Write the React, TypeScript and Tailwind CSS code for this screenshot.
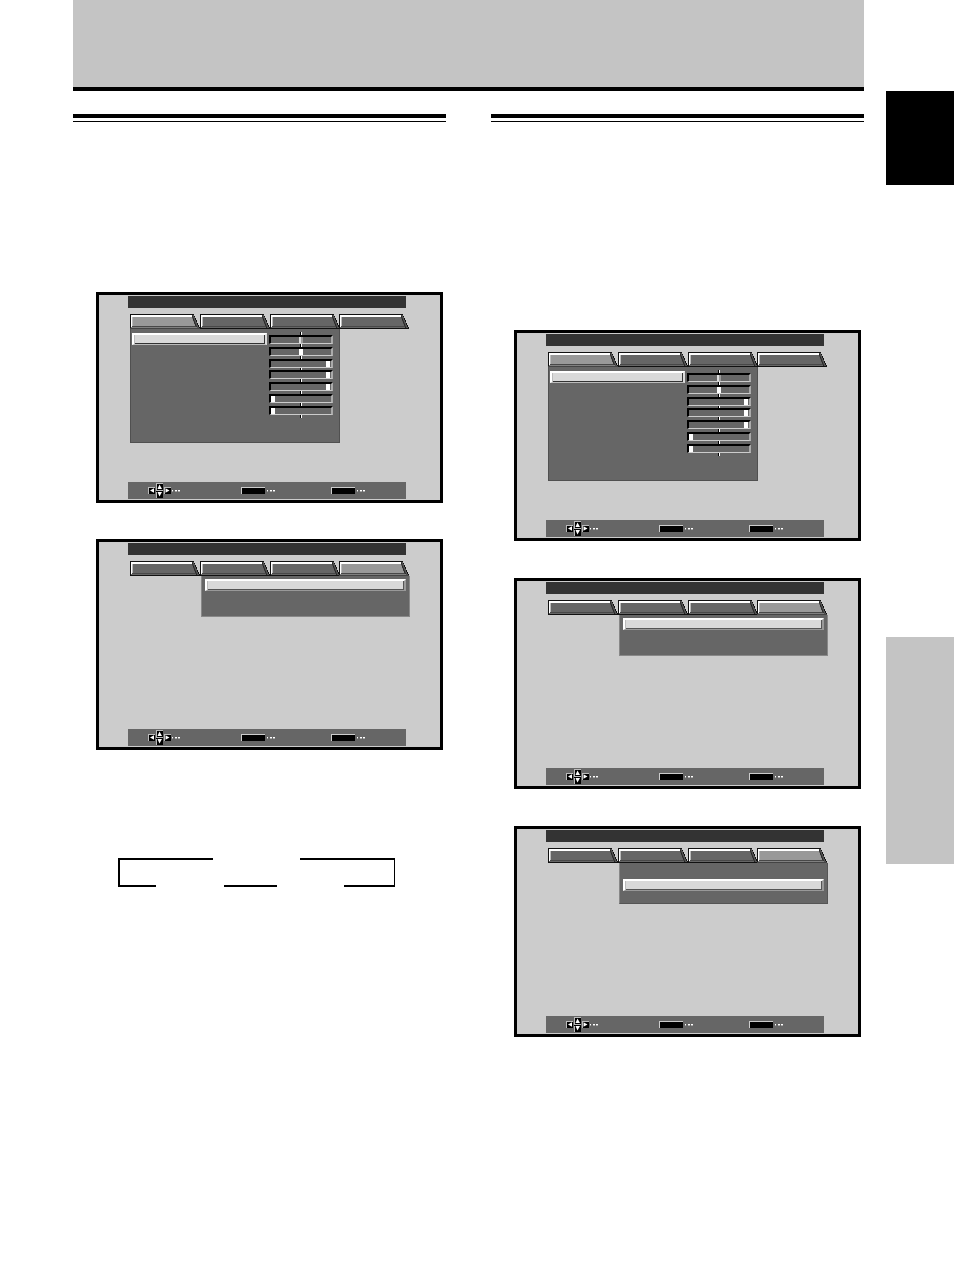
import React from "react";

type MenuKind = "picture" | "optionFirst" | "optionSecond";

function Tab({ active, label }: { active: boolean; label: string }) {
  return (
    <button type="button" role="tab" aria-selected={active} aria-label={label} className="block h-[15px] min-w-0 flex-1">
      <svg viewBox="0 0 70 15" preserveAspectRatio="none" className="block h-[15px] w-full overflow-visible" shapeRendering="crispEdges">
        <path d="M0 0H64L70 14V15H0Z" fill="#111" />
        <path d="M1 1H62L67 14H1Z" fill={active ? "#999" : "#666"} />
        <path d="M62 1H64L69 14H66Z" fill="#555" />
        <path d="M62 1L67 14" stroke="#222" strokeWidth="1" fill="none" />
        <path d="M1 1H62V3H1Z" fill="#fff" />
        <path d="M1 1H2V13H1Z" fill="#fff" />
        <path d="M2 3H3V12H2Z" fill="#bbb" />
        <path d="M2 12H65V13H2Z" fill="#484848" />
        {active && <path d="M1 13H67V14H1Z" fill="#808080" />}
        {active && <path d="M0 14H70V15H0Z" fill="#444" />}
      </svg>
    </button>
  );
}

function Slider({ value, label, selected }: { value: number; label: string; selected?: boolean }) {
  const base =
    "relative m-0 block h-[9px] w-16 appearance-none border-2 border-b border-b-[#ccc] border-l-black border-r-[#aaa] border-t-black bg-[#666] [&::-webkit-slider-thumb]:h-[6px] [&::-webkit-slider-thumb]:w-1 [&::-webkit-slider-thumb]:appearance-none [&::-webkit-slider-thumb]:rounded-none";
  return (
    <input
      type="range"
      aria-label={label}
      defaultValue={value}
      className={
        selected
          ? `${base} [&::-webkit-slider-thumb]:border-l-2 [&::-webkit-slider-thumb]:border-[#ddd] [&::-webkit-slider-thumb]:bg-[#999]`
          : `${base} [&::-webkit-slider-thumb]:bg-white`
      }
    />
  );
}

const sliders = [
  { label: "Contrast", value: 50 },
  { label: "Brightness", value: 50 },
  { label: "Red", value: 98 },
  { label: "Green", value: 98 },
  { label: "Blue", value: 98 },
  { label: "Horizontal enhance", value: 0 },
  { label: "Vertical enhance", value: 0 },
];

function Highlight({ label }: { label: string }) {
  return (
    <button
      type="button"
      aria-label={label}
      className="block h-3 w-full border-b border-l-2 border-r-2 border-t-2 border-b-[#999] border-l-white border-r-[#999] border-t-white bg-[#d9d9d9] shadow-[inset_1px_0_0_#bbb,inset_-1px_-1px_0_#555]"
    />
  );
}

function PicturePanel() {
  return (
    <div className="ml-0.5 flex h-[114px] w-[210px] border-b border-l border-r border-[#505050] bg-[#666] pl-px pt-1">
      <div className="w-[135px]">
        <button
          type="button"
          aria-label="Contrast"
          className="block h-3 w-full border-b border-l-2 border-r-2 border-t-2 border-b-[#bbb] border-l-white border-r-[#ddd] border-t-white bg-[#d9d9d9] shadow-[inset_1px_0_0_#bbb,inset_-1px_-1px_0_#333]"
        />
      </div>
      <div className="relative -mt-px ml-0.5 h-[86px] w-16 pt-[3px]">
        <span className="absolute left-[31px] top-0 h-full w-0.5 border-l border-black bg-white" />
        <div className="flex h-20 flex-col justify-between">
          {sliders.map((s, i) => (
            <Slider key={s.label} value={s.value} label={s.label} selected={i === 0} />
          ))}
        </div>
      </div>
    </div>
  );
}

function OptionPanel({ second }: { second: boolean }) {
  return (
    <div
      className={
        second
          ? "ml-[73px] h-[41px] w-[209px] border-b border-l border-r border-[#555] border-l-[#888] bg-[#666] px-[3px] pt-4"
          : "ml-[73px] h-[41px] w-[209px] border-b border-l border-r border-[#888] bg-[#666] px-[3px] pt-[3px]"
      }
    >
      <Highlight label={second ? "Second option" : "First option"} />
    </div>
  );
}

function Dots() {
  return (
    <svg width="8" height="2" viewBox="0 0 8 2" shapeRendering="crispEdges" aria-hidden="true">
      <path d="M0 0H1V1H0ZM3 0H5V1H3ZM6 0H8V1H6Z" fill="#fff" />
      <path d="M0 1H1V2H0ZM3 1H5V2H3ZM6 1H8V2H6Z" fill="#aaa" />
    </svg>
  );
}

function ArrowKeys() {
  return (
    <svg width="23" height="15" viewBox="0 0 23 15" aria-hidden="true">
      <g fill="#000" shapeRendering="crispEdges">
        <path d="M0 4H7V11H0ZM8 0H15V7H8ZM8 8H15V15H8ZM16 4H23V11H16Z" />
      </g>
      <path
        d="M0.5 11V4.5H7M8.5 7V0.5H15M8.5 15V8.5M16.5 11V4.5H23M8 7.5H15"
        stroke="#bbb"
        fill="none"
        shapeRendering="crispEdges"
      />
      <g fill="#fff">
        <path d="M2 7.5L6 5.2V9.8Z" />
        <path d="M11.5 1.6L14 6H9.5Z" />
        <path d="M11.5 13.6L14 9H9.5Z" />
        <path d="M21.5 7.5L17.5 5.2V9.8Z" />
      </g>
    </svg>
  );
}

function Key({ label }: { label: string }) {
  return (
    <div className="flex items-center gap-0.5">
      <button type="button" aria-label={label} className="block h-[7px] w-6 border-l border-t border-[#ccc] bg-black" />
      <Dots />
    </div>
  );
}

function Screen({ kind }: { kind: MenuKind }) {
  const activeIndex = kind === "picture" ? 0 : 3;
  return (
    <section className="ml-[23px] mr-[3px] flex min-h-[211px] flex-col border-[3px] border-black bg-[#ccc] pb-px pl-[29px] pt-px">
      <div className="mr-[34px] h-3 bg-[#333]" />
      <div role="tablist" className="ml-0.5 mr-[31px] mt-1.5 flex">
        {["Picture", "Screen", "Setup", "Option"].map((label, i) => (
          <Tab key={label} label={label} active={i === activeIndex} />
        ))}
      </div>
      {kind === "picture" ? <PicturePanel /> : <OptionPanel second={kind === "optionSecond"} />}
      <div className="mr-[34px] mt-auto grid h-[17px] grid-cols-[93px_90px_1fr] items-center bg-[#666] pl-5">
        <div className="flex items-center gap-px">
          <ArrowKeys />
          <Dots />
        </div>
        <Key label="Set" />
        <Key label="Menu" />
      </div>
    </section>
  );
}

function DoubleRule() {
  return <div className="h-2 border-b border-t-4 border-black" />;
}

function CycleDiagram() {
  return (
    <svg width="277" height="29" viewBox="0 0 277 29" className="ml-[45px] mt-[108px] block" shapeRendering="crispEdges" aria-hidden="true">
      <path d="M0 0H95V2H2V27H38V29H0Z" fill="#000" />
      <path d="M182 0H277V29H226V27H276V2H182Z" fill="#000" />
      <path d="M106 27H159V29H106Z" fill="#000" />
    </svg>
  );
}

export default function App() {
  return (
    <div className="flex min-h-screen bg-white pl-[73px]">
      <main className="min-w-0 flex-1">
        <header className="h-[91px] border-b-4 border-black bg-[#c4c4c4]" />
        <div className="mt-[23px] grid grid-cols-2 gap-[45px]">
          <div>
            <DoubleRule />
            <div className="mt-[170px] flex flex-col gap-9">
              <Screen kind="picture" />
              <Screen kind="optionFirst" />
            </div>
            <CycleDiagram />
          </div>
          <div>
            <DoubleRule />
            <div className="mt-[208px] flex flex-col gap-[37px]">
              <Screen kind="picture" />
              <Screen kind="optionFirst" />
              <Screen kind="optionSecond" />
            </div>
          </div>
        </div>
      </main>
      <aside className="ml-[22px] w-[68px] shrink-0 pt-[91px]">
        <div className="h-[94px] bg-black" />
        <div className="mt-[452px] h-[227px] bg-[#c4c4c4]" />
      </aside>
    </div>
  );
}
